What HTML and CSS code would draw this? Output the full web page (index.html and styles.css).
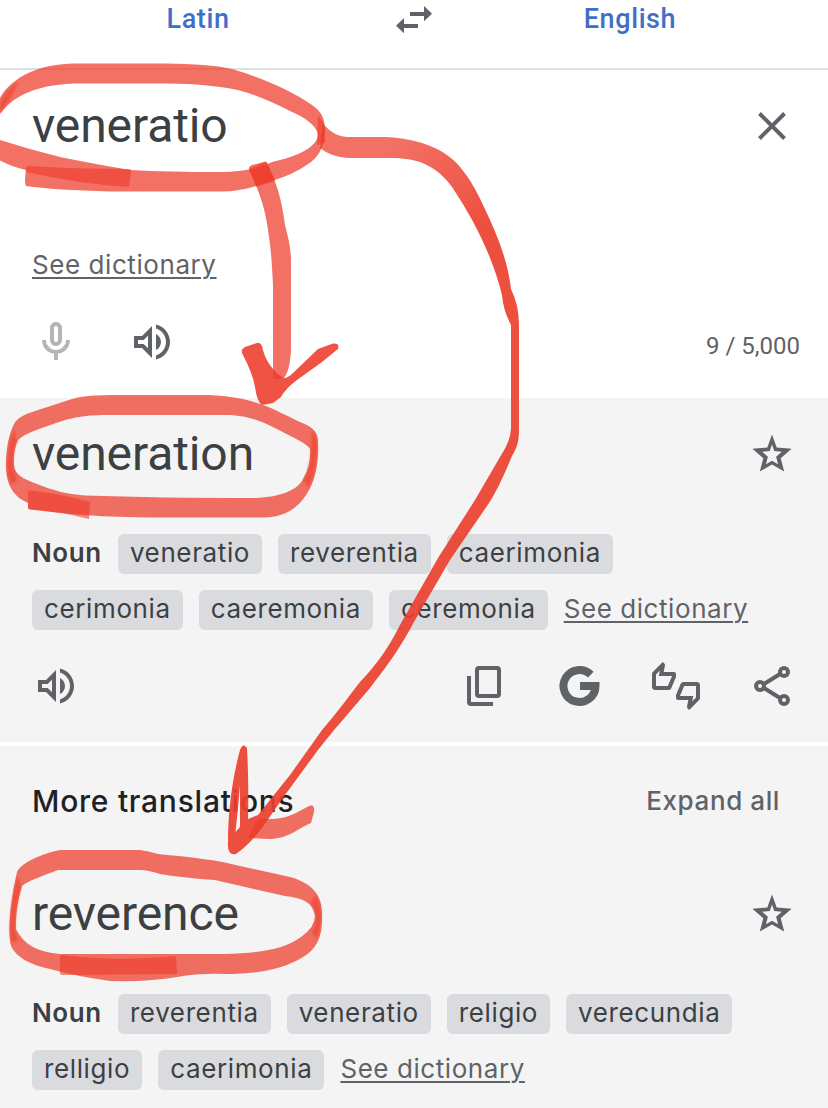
FILE: index.html
```html
<!DOCTYPE html>
<html lang="en">
<head>
    <meta charset="UTF-8">
    <meta name="viewport" content="width=device-width, initial-scale=1.0">
    <title>Translate</title>
    <link rel="stylesheet" href="styles.css">
</head>
<body>

    <!-- shared icons -->
    <svg class="hidden">
        <symbol id="volume" viewBox="0 0 24 24">
            <path d="M3 9v6h4l5 5V4L7 9H3zm7-.17v6.34L7.83 13H5v-2h2.83L10 8.83zM16.5 12c0-1.77-1.02-3.29-2.5-4.03v8.05c1.48-.73 2.5-2.25 2.5-4.02zM14 3.23v2.06c2.89.86 5 3.54 5 6.71s-2.11 5.85-5 6.71v2.06c4.01-.91 7-4.49 7-8.77 0-4.28-2.99-7.86-7-8.77z"/>
        </symbol>
        <symbol id="star" viewBox="0 0 48 48">
            <path fill-rule="evenodd" d="M24 4.500L28.700 17.600 43.600 18.700 32.700 28.300 36.200 41.500 24 34.600 11.800 41.500 15.300 28.300 4.400 18.700 19.300 17.600zM24 14.500L21.800 21 14.200 21.800 19.900 26.700 17.900 34.300 24 30.800 30.100 34.300 28.100 26.700 33.800 21.800 26.200 21z"/>
        </symbol>
    </svg>

    <div class="header">
        <button class="lang">Latin</button>
        <svg class="swap" viewBox="0 0 36 28">
            <path d="M14 6h14V0l8 7.700-8 7.500V10H14zM22 18H8v-6L0 19.800l8 7.500V22h14z"/>
        </svg>
        <button class="lang">English</button>
    </div>

    <div class="source">
        <div class="row">
            <h2 class="word">veneratio</h2>
            <svg class="icon" viewBox="0 0 48 48"><path class="line" d="M11.500 11.500l25 25M36.500 11.500l-25 25"/></svg>
        </div>
        <a class="dictionary">See dictionary</a>
        <div class="row tools">
            <div class="group">
                <svg class="icon mic" viewBox="0 0 24 24"><path d="M12 14c1.660 0 3-1.340 3-3V5c0-1.660-1.340-3-3-3S9 3.340 9 5v6c0 1.660 1.340 3 3 3zm-1-9c0-.550.450-1 1-1s1 .450 1 1v6c0 .550-.450 1-1 1s-1-.450-1-1V5zm6 6c0 2.760-2.240 5-5 5s-5-2.240-5-5H5c0 3.530 2.610 6.430 6 6.920V21h2v-3.080c3.390-.490 6-3.390 6-6.920h-2z"/></svg>
                <svg class="icon"><use href="#volume"/></svg>
            </div>
            <span class="count">9 / 5,000</span>
        </div>
    </div>

    <div class="result">
        <div class="row">
            <h2 class="word">veneration</h2>
            <svg class="icon"><use href="#star"/></svg>
        </div>
        <div class="chips">
            <b class="pos">Noun</b>
            <span class="chip">veneratio</span>
            <span class="chip">reverentia</span>
            <span class="chip">caerimonia</span>
        </div>
        <div class="chips">
            <span class="chip">cerimonia</span>
            <span class="chip">caeremonia</span>
            <span class="chip">ceremonia</span>
            <a class="dictionary">See dictionary</a>
        </div>
        <div class="row actions">
            <svg class="icon"><use href="#volume"/></svg>
            <div class="group">
                <svg class="icon" viewBox="0 0 48 48"><path class="line" d="M9 12v26a2 2 0 0 0 2 2h22" transform="translate(0 2)"/><rect class="line" x="17" y="6" width="22" height="28" rx="2"/></svg>
                <svg class="icon" viewBox="0 0 48 48"><path class="google" d="M34.800 12.700A16 16 0 1 0 39.500 24H24"/></svg>
                <svg class="icon" viewBox="0 0 24 24"><path d="M12 6c0-.55-.45-1-1-1H5.820l.66-3.180.02-.23c0-.31-.13-.59-.33-.8L5.380 0 .44 4.940C.17 5.210 0 5.590 0 6v6.500c0 .83.67 1.500 1.500 1.500h6.750c.62 0 1.150-.38 1.380-.91l2.260-5.290c.07-.17.11-.36.11-.55V6zm-2 1.130L7.920 12H2V6.210l1.930-1.930L3.360 7H10v.13zM22.500 10h-6.750c-.62 0-1.150.38-1.380.91l-2.260 5.290c-.07.17-.11.36-.11.55V18c0 .55.45 1 1 1h5.180l-.66 3.180-.02.24c0 .31.13.59.33.8l.79.78 4.940-4.940c.27-.27.44-.65.44-1.060v-6.500c0-.83-.67-1.500-1.500-1.500zm-.5 7.790l-1.930 1.930.57-2.720H14v-.13L16.080 12H22v5.790z"/></svg>
                <svg class="icon" viewBox="0 0 48 48"><path class="line" d="M32 12L16 22M16 26l16 10"/><circle class="line" cx="12" cy="24" r="4"/><circle class="line" cx="36" cy="10" r="4"/><circle class="line" cx="36" cy="38" r="4"/></svg>
            </div>
        </div>
    </div>

    <div class="more">
        <div class="row more-head">
            <h3>More translations</h3>
            <button class="expand">Expand all</button>
        </div>
        <div class="row">
            <h2 class="word">reverence</h2>
            <svg class="icon"><use href="#star"/></svg>
        </div>
        <div class="chips">
            <b class="pos">Noun</b>
            <span class="chip">reverentia</span>
            <span class="chip">veneratio</span>
            <span class="chip">religio</span>
            <span class="chip">verecundia</span>
        </div>
        <div class="chips">
            <span class="chip">relligio</span>
            <span class="chip">caerimonia</span>
            <a class="dictionary">See dictionary</a>
        </div>
    </div>

    <!-- marker drawing over the page -->
    <svg class="marker" viewBox="0 0 828 1108">
        <defs>
            <linearGradient id="ink" gradientUnits="userSpaceOnUse" x1="400" y1="140" x2="480" y2="230">
                <stop offset="0" stop-color="#ed3a28" stop-opacity=".72"/>
                <stop offset="1" stop-color="#ec402f" stop-opacity=".92"/>
            </linearGradient>
            <filter id="soft" x="-50%" y="-20%" width="200%" height="140%">
                <feGaussianBlur stdDeviation="1.2"/>
            </filter>
        </defs>

        <!-- first circle -->
        <path class="ink" fill-rule="evenodd" d="M-6 112C2 82 32 64 75 63.500H165C195 64 215 65 232 69C262 78 290 90 312 105C321 111 325 118 325 130C324 146 320 155 311 162C298 172 280 179 262 184C248 189 235 191.500 222 191.500H110Q55 190 26 186Q24 182 26 170Q8 166-6 157zM-6 122V138Q28 149 60 157Q100 165 130 170Q170 172 220 172C240 172 258 169 272 162C300 156 318 146 318 134C316 126 306 118 292 112C265 98 242 89 220 87C203 84.500 185 83.500 165 83.500H75C50 84 28 90 14 100Q4 107-6 122z"/>
        <path class="dark" d="M28 166Q75 169 129 169Q131 169 131 171L129 187Q80 184 26 172Q25 166 28 166z"/>
        <path class="dark soft" d="M0 103Q7 88 18 82Q13 96 0 114z"/>
        <path class="dark" d="M318 116Q324 120 325 130V143L317 145z"/>

        <!-- short arrow -->
        <path class="ink" d="M249 169Q248 167 252 165L264 162Q267 161 268 165C279 188 282 204 285 225C289 240 291 250 291 262V350Q290 372 283 379H273V285C272 264 271 250 269 237C266 212 262 198 249 169z"/>
        <path class="dark" d="M249 169L264 162Q267 161 268 165L275 181L256 187z"/>
        <path class="bold" d="M242 353Q241 349 245 347L257 343Q260 342 262 346Q266 366 283 378Q287 379 293 373L318 349L333 343.500Q340 343 338 349L322 362L297 380Q286 388 281 397L273 403L262 405Q257 402 255 387Q253 374 242 353z"/>

        <!-- second circle -->
        <path class="ink" fill-rule="evenodd" d="M14 424C18 417 26 414 35 411L72 399C84 395 102 395 130 395H200C225 395 243 398 260 404C275 409 287 416 300 422C314 427 318 433 318 442C319 464 315 482 306 495C297 509 284 517 264 517.500H150Q100 517 60 513L30 509.500Q28 509 28 506V503C12 496 6 483 6 465C6 448 9 434 14 424zM18 440Q13 451 14 464C14 475 24 479 37 484Q60 494 85 495.500Q160 498 255 498C281 497 299 490 304 477Q311 465 310 449C308 444 292 437 277 429C257 419 244 415 225 415H110C86 415 76 417 62 421C42 428 25 433 18 440z"/>
        <path class="dark" d="M30 490.500Q62 494 90 502L89 519Q58 511 28 509V493Q28 490 30 490.500z"/>
        <path class="dark soft" d="M14 429L17 441Q13 451 13 465L17 481L11 484Q7 477 7 465Q8 443 14 429zM312 431Q317 435 317 443Q318 468 308 488L304 480Q311 464 311 449z"/>

        <!-- third circle -->
        <path class="ink" fill-rule="evenodd" d="M17 872C20 865 36 855 60 850H140Q148 851 158 854C190 857 218 860 240 866L290 877C314 884 322 896 322 914C323 936 317 949 303 957C284 969 258 974 225 974Q200 973 177 977Q150 982 110 981Q75 976 50 969C30 965 16 957 11 946C7 930 11 898 17 872zM22 886Q15 910 16 929C24 945 38 952 60 954H225C262 953 284 949 301 937Q315 927 315 916C313 902 302 898 285 896Q245 887 215 880Q185 878 160 874Q148 870 140 870H58C42 876 28 881 22 886z"/>
        <path class="dark" d="M62 955Q118 962 176 956L177 974L63 975Q60 975 60 973V957Q60 955 62 955z"/>
        <path class="dark soft" d="M18 876L21 887Q15 910 15 930L18 940L12 943Q9 935 10 925Q11 896 18 876zM315 895Q321 903 321 914Q321 928 317 939L312 932Q316 925 316 916Q315 908 311 903z"/>

        <!-- long arrow -->
        <path fill="url(#ink)" d="M323 124Q335 137 347 137H385C410 138 424 143 437 149C460 160 473 183 484 207C498 236 508 262 511 289Q519 305 519 325V430C519 441 517 448 512 456C503 477 497 491 487 506L450 560L414 622C398 652 386 667 370 688C350 712 336 727 318 750L285 795L262 828Q250 844 236 854Q227 856 228 842C228 808 233 776 240 750Q243 742 247 748Q249 785 248 819L258 815L290 775L322 730C336 714 346 700 360 682C379 662 390 645 400 625L438 558L475 500L500 457Q511 440 511 428V325Q503 310 502 295C492 255 474 220 452 187C436 165 418 159 395 158H348Q331 157 320 148zM240 785Q238 810 235.500 832L240 827z"/>
        <path class="ink" d="M258 819H274C290 818 299 811 309 806Q315 804 314 812L311 823C295 830 288 839 268 839L248 838z"/>
    </svg>

</body>
</html>
```
FILE: styles.css
```css
body {
    margin: 0;
    width: 828px;
    height: 1108px;
    position: relative;
    overflow: hidden;
    background-color: white;
    color: #3c4043;
    font-family: Inter, Roboto, sans-serif;
    font-size: 26px;
    letter-spacing: 0.62px;
}
h2, h3 {
    margin: 0;
}
button {
    border: none;
    padding: 0;
    background: none;
    font-family: inherit;
}
.hidden {
    display: none;
}
.header {
    display: grid;
    grid-template-columns: 1fr 36px 1fr;
    height: 68px;
    border-bottom: 2px solid #e0e0e0;
}
.lang {
    height: 37px;
    color: #3f6fc9;
    font-family: Roboto, sans-serif;
    font-size: 27px;
    font-weight: 500;
    letter-spacing: 0.6px;
}
.swap {
    width: 36px;
    height: 28px;
    margin-top: 6px;
    fill: #5f6368;
}
.row {
    display: flex;
    justify-content: space-between;
    align-items: center;
    padding-right: 32px;
}
.group {
    display: flex;
    gap: 48px;
}
.icon {
    width: 48px;
    height: 48px;
    flex: none;
    fill: #5f6368;
}
.line {
    fill: none;
    stroke: #5f6368;
    stroke-width: 4;
}
.google {
    fill: none;
    stroke: #5f6368;
    stroke-width: 8;
}
.mic {
    fill: #b4b5b7;
}
.word {
    font-family: Roboto, sans-serif;
    font-size: 48px;
    font-weight: 400;
    line-height: 64px;
    letter-spacing: -0.1px;
}
.source {
    box-sizing: border-box;
    height: 328px;
    padding: 24px 0 0 32px;
}
.dictionary {
    color: #5f6368;
    text-decoration: underline;
    text-decoration-thickness: 2px;
    text-underline-offset: 3px;
    line-height: 40px;
    letter-spacing: 0.57px;
}
.source .dictionary {
    display: block;
    margin-top: 87px;
}
.tools {
    margin-top: 33px;
    padding-right: 28px;
}
.count {
    padding-top: 8px;
    color: #5f6368;
    font-family: Roboto, sans-serif;
    font-size: 24px;
    letter-spacing: 0;
}
.result {
    box-sizing: border-box;
    height: 344px;
    padding: 24px 0 0 32px;
    background-color: #f4f4f4;
}
.chips {
    display: flex;
    gap: 16px;
    margin-top: 16px;
    line-height: 38px;
}
.row + .chips {
    margin-top: 48px;
}
.chips .dictionary {
    line-height: 38px;
}
.chip {
    height: 40px;
    padding: 0 12px;
    border-radius: 6px;
    background-color: #dadbdf;
}
.pos {
    font-weight: 600;
}
.actions {
    margin-top: 32px;
}
.more {
    height: 362px;
    margin-top: 4px;
    padding-left: 32px;
    background-color: #f4f4f4;
}
.more-head {
    height: 108px;
    margin-bottom: 28px;
    padding-right: 48px;
}
h3 {
    padding-top: 2px;
    color: #202124;
    font-size: 30px;
    font-weight: 500;
    letter-spacing: 0.75px;
}
.expand {
    color: #5f6368;
    font-size: 26px;
    font-weight: 500;
    letter-spacing: 0.6px;
}
.marker {
    position: absolute;
    top: 0;
    left: 0;
    width: 828px;
    height: 1108px;
    pointer-events: none;
}
.ink {
    fill: #ed3a28;
    fill-opacity: 0.72;
}
.dark {
    fill: #ec3b2a;
    fill-opacity: 0.6;
}
.soft {
    filter: url(#soft);
}
.bold {
    fill: #ec402f;
    fill-opacity: 0.9;
}
```
